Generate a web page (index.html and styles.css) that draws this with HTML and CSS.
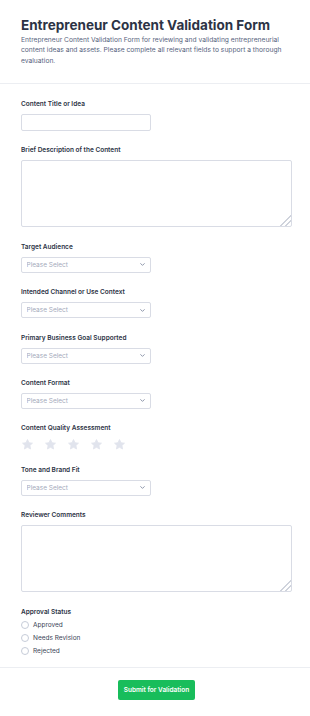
FILE: index.html
```html
<!DOCTYPE html>
<html lang="en">
<head>
<meta charset="utf-8">
<title>Entrepreneur Content Validation Form</title>
<link rel="stylesheet" href="styles.css">
</head>
<body>
<form class="form">
  <header class="form-header">
    <h1 class="form-title">Entrepreneur Content Validation Form</h1>
    <p class="form-desc">Entrepreneur Content Validation Form for reviewing and validating entrepreneurial content ideas and assets. Please complete all relevant fields to support a thorough evaluation.</p>
  </header>

  <div class="form-body">
    <div class="field">
      <label class="label" for="title">Content Title or Idea</label>
      <input class="input" id="title" type="text">
    </div>

    <div class="field">
      <label class="label" for="desc">Brief Description of the Content</label>
      <textarea class="textarea" id="desc"></textarea>
    </div>

    <div class="field">
      <label class="label">Target Audience</label>
      <div class="select-wrap">
        <select class="select"><option>Please Select</option></select>
        <svg class="chevron" viewBox="0 0 8 5" width="5" height="3"><path d="M1 1l3 3 3-3" fill="none" stroke="currentColor" stroke-width="1.6" stroke-linecap="round" stroke-linejoin="round"/></svg>
      </div>
    </div>

    <div class="field">
      <label class="label">Intended Channel or Use Context</label>
      <div class="select-wrap">
        <select class="select"><option>Please Select</option></select>
        <svg class="chevron" viewBox="0 0 8 5" width="5" height="3"><path d="M1 1l3 3 3-3" fill="none" stroke="currentColor" stroke-width="1.6" stroke-linecap="round" stroke-linejoin="round"/></svg>
      </div>
    </div>

    <div class="field">
      <label class="label">Primary Business Goal Supported</label>
      <div class="select-wrap">
        <select class="select"><option>Please Select</option></select>
        <svg class="chevron" viewBox="0 0 8 5" width="5" height="3"><path d="M1 1l3 3 3-3" fill="none" stroke="currentColor" stroke-width="1.6" stroke-linecap="round" stroke-linejoin="round"/></svg>
      </div>
    </div>

    <div class="field">
      <label class="label">Content Format</label>
      <div class="select-wrap">
        <select class="select"><option>Please Select</option></select>
        <svg class="chevron" viewBox="0 0 8 5" width="5" height="3"><path d="M1 1l3 3 3-3" fill="none" stroke="currentColor" stroke-width="1.6" stroke-linecap="round" stroke-linejoin="round"/></svg>
      </div>
    </div>

    <div class="field">
      <label class="label">Content Quality Assessment</label>
      <div class="stars">
        <svg class="star" viewBox="0 0 24 24" width="13" height="13"><path d="M12 2.8l2.8 5.9 6.4.8-4.7 4.4 1.2 6.4L12 17.2l-5.7 3.1 1.2-6.4-4.7-4.4 6.4-.8z"/></svg>
        <svg class="star" viewBox="0 0 24 24" width="13" height="13"><path d="M12 2.8l2.8 5.9 6.4.8-4.7 4.4 1.2 6.4L12 17.2l-5.7 3.1 1.2-6.4-4.7-4.4 6.4-.8z"/></svg>
        <svg class="star" viewBox="0 0 24 24" width="13" height="13"><path d="M12 2.8l2.8 5.9 6.4.8-4.7 4.4 1.2 6.4L12 17.2l-5.7 3.1 1.2-6.4-4.7-4.4 6.4-.8z"/></svg>
        <svg class="star" viewBox="0 0 24 24" width="13" height="13"><path d="M12 2.8l2.8 5.9 6.4.8-4.7 4.4 1.2 6.4L12 17.2l-5.7 3.1 1.2-6.4-4.7-4.4 6.4-.8z"/></svg>
        <svg class="star" viewBox="0 0 24 24" width="13" height="13"><path d="M12 2.8l2.8 5.9 6.4.8-4.7 4.4 1.2 6.4L12 17.2l-5.7 3.1 1.2-6.4-4.7-4.4 6.4-.8z"/></svg>
      </div>
    </div>

    <div class="field">
      <label class="label">Tone and Brand Fit</label>
      <div class="select-wrap">
        <select class="select"><option>Please Select</option></select>
        <svg class="chevron" viewBox="0 0 8 5" width="5" height="3"><path d="M1 1l3 3 3-3" fill="none" stroke="currentColor" stroke-width="1.6" stroke-linecap="round" stroke-linejoin="round"/></svg>
      </div>
    </div>

    <div class="field">
      <label class="label" for="comments">Reviewer Comments</label>
      <textarea class="textarea" id="comments"></textarea>
    </div>

    <div class="field field-radio">
      <span class="label">Approval Status</span>
      <div class="radios">
        <label class="radio"><input type="radio" name="status" class="radio-input"><span>Approved</span></label>
        <label class="radio"><input type="radio" name="status" class="radio-input"><span>Needs Revision</span></label>
        <label class="radio"><input type="radio" name="status" class="radio-input"><span>Rejected</span></label>
      </div>
    </div>
  </div>

  <div class="form-footer">
    <button class="submit" type="button">Submit for Validation</button>
  </div>
</form>
</body>
</html>
```

FILE: styles.css
```css
* {
  box-sizing: border-box;
}

body {
  margin: 0;
  background: #ffffff;
  font-family: Inter, "Noto Sans", sans-serif;
  color: #2c3345;
}

.form {
  display: flex;
  flex-direction: column;
}

.form-header {
  padding: 17px 12px 16px 21px;
  border-bottom: 1px solid #eceef2;
}

.form-title {
  margin: 0;
  font-size: 13.5px;
  line-height: 16px;
  font-weight: 700;
  color: #2c3345;
}

.form-desc {
  margin: 1.6px 0 0;
  font-size: 6.7px;
  line-height: 10.7px;
  color: #57647e;
}

.form-body {
  display: flex;
  flex-direction: column;
  gap: 14.4px;
  padding: 15.3px 18px 9.5px 21px;
  border-bottom: 1px solid #eceef2;
}

.field {
  display: flex;
  flex-direction: column;
  align-items: flex-start;
  gap: 5px;
}

.label {
  font-size: 6.5px;
  line-height: 10px;
  font-weight: 600;
  color: #2c3345;
}

.input,
.select,
.textarea {
  border: 1px solid #d9dce5;
  border-radius: 2px;
  background: #ffffff;
  font-family: inherit;
  font-size: 6.5px;
  color: #2c3345;
  margin: 0;
  outline: none;
}

.input {
  width: 130px;
  height: 17px;
  padding: 0 4px;
}

.textarea {
  width: 271px;
  height: 67px;
  padding: 4px;
  resize: vertical;
  display: block;
}

.textarea::-webkit-resizer {
  background: linear-gradient(135deg, transparent 0 62%, #cfd3dc 62% 68%, transparent 68% 78%, #cfd3dc 78% 84%, transparent 84%);
}

.select-wrap {
  position: relative;
  width: 130px;
  height: 16px;
}

.select {
  appearance: none;
  -webkit-appearance: none;
  width: 100%;
  height: 100%;
  padding: 0 12px 0 4.5px;
  color: #a3aabb;
  display: block;
}

.chevron {
  position: absolute;
  right: 6px;
  top: 6.5px;
  color: #8b93a8;
  pointer-events: none;
}

.stars {
  display: flex;
  gap: 10px;
  height: 12px;
  align-items: center;
}

.star {
  display: block;
  fill: #e1e4ed;
  stroke: #e1e4ed;
  stroke-width: 1.5;
  stroke-linejoin: round;
}

.field-radio {
  gap: 2px;
}

.radios {
  display: flex;
  flex-direction: column;
}

.radio {
  display: flex;
  align-items: center;
  gap: 4px;
  height: 13px;
  font-size: 6.5px;
  color: #3b4457;
}

.radio-input {
  appearance: none;
  -webkit-appearance: none;
  width: 8px;
  height: 8px;
  margin: 0;
  border: 1px solid #c6ccd8;
  border-radius: 50%;
  background: #ffffff;
}

.form-footer {
  display: flex;
  justify-content: center;
  padding: 12.4px 18px 16px 21px;
}

.submit {
  height: 20px;
  padding: 0 5.5px;
  border: 0;
  border-radius: 2px;
  background: #18bd5b;
  color: #ffffff;
  font-family: inherit;
  font-size: 6.5px;
  font-weight: 600;
}
```
